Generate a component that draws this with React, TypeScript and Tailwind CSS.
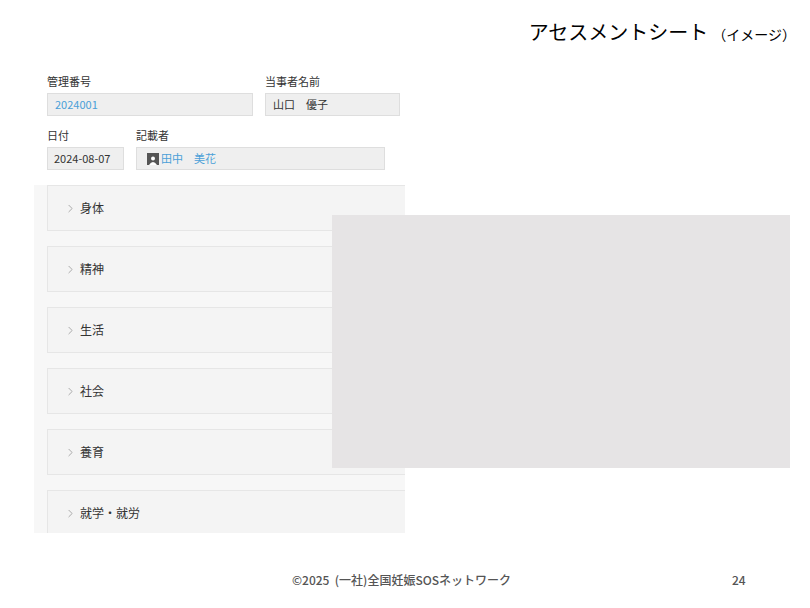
import { ChevronRight } from "lucide-react";

const sections = ["身体", "精神", "生活", "社会", "養育", "就学・就労"];

export default function App() {
  return (
    <div
      className="relative w-[810px] h-[608px] bg-white overflow-hidden text-[#333]"
      style={{ fontFamily: '"Noto Sans CJK JP", "Noto Sans", sans-serif' }}
    >
      {/* Title */}
      <div className="flex justify-end items-baseline pr-[14px] pt-[17px] h-[73px]">
        <span className="text-[20px] text-black">アセスメントシート</span>
        <span className="text-[14px] text-black ml-1">（イメージ）</span>
      </div>

      {/* Screenshot panel */}
      <div className="ml-[34px] w-[371px] h-[460px] bg-[#f7f7f7] overflow-hidden">
        <div className="bg-white pl-[13px] pb-[15px]">
          <div className="flex gap-[12px]">
            <div className="w-[206px]">
              <div className="text-[11px] leading-[16px] h-[20px]">管理番号</div>
              <div className="h-[23px] bg-[#efefef] border border-[#dedede] text-[11px] text-[#4a9fd8] px-[7px] leading-[21px]">2024001</div>
            </div>
            <div className="flex-1">
              <div className="text-[11px] leading-[16px] h-[20px]">当事者名前</div>
              <div className="h-[23px] mr-[5px] bg-[#efefef] border border-[#dedede] text-[11px] px-[7px] leading-[21px]">山口　優子</div>
            </div>
          </div>
          <div className="flex gap-[12px] mt-[11px]">
            <div>
              <div className="text-[11px] leading-[16px] h-[20px]">日付</div>
              <div className="h-[23px] w-[77px] bg-[#efefef] border border-[#dedede] text-[11px] px-[6px] leading-[21px]">2024-08-07</div>
            </div>
            <div>
              <div className="text-[11px] leading-[16px] h-[20px]">記載者</div>
              <div className="h-[23px] w-[249px] bg-[#efefef] border border-[#dedede] text-[11px] text-[#4a9fd8] px-[10px] flex items-center gap-[2px]">
                <span className="w-[12px] h-[12px] bg-[#555] flex items-end justify-center overflow-hidden">
                  <svg width="10" height="10" viewBox="0 0 10 10"><circle cx="5" cy="3.5" r="2" fill="#fff" /><path d="M1 10 Q5 4 9 10Z" fill="#fff" /></svg>
                </span>
                田中　美花
              </div>
            </div>
          </div>
        </div>
        <div className="flex flex-col gap-[15px] pl-[13px]">
          {sections.map((s) => (
            <div key={s} className="h-[46px] bg-[#f4f4f4] border border-[#e6e6e6] border-r-0 flex items-center pl-[16px] gap-[3px] text-[12px]">
              <ChevronRight size={13} strokeWidth={1.5} className="text-[#999]" />
              {s}
            </div>
          ))}
        </div>
      </div>

      {/* Overlay */}
      <div className="absolute left-[332px] top-[215px] w-[458px] h-[253px] bg-[#e6e4e5]" />

      {/* Footer */}
      <div className="absolute left-[292px] top-[571px] text-[12px] font-medium text-[#555]">
        ©2025 &nbsp;(一社)全国妊娠SOSネットワーク
      </div>
      <div className="absolute left-[732px] top-[571px] text-[12px] font-medium text-[#555]">24</div>
    </div>
  );
}
